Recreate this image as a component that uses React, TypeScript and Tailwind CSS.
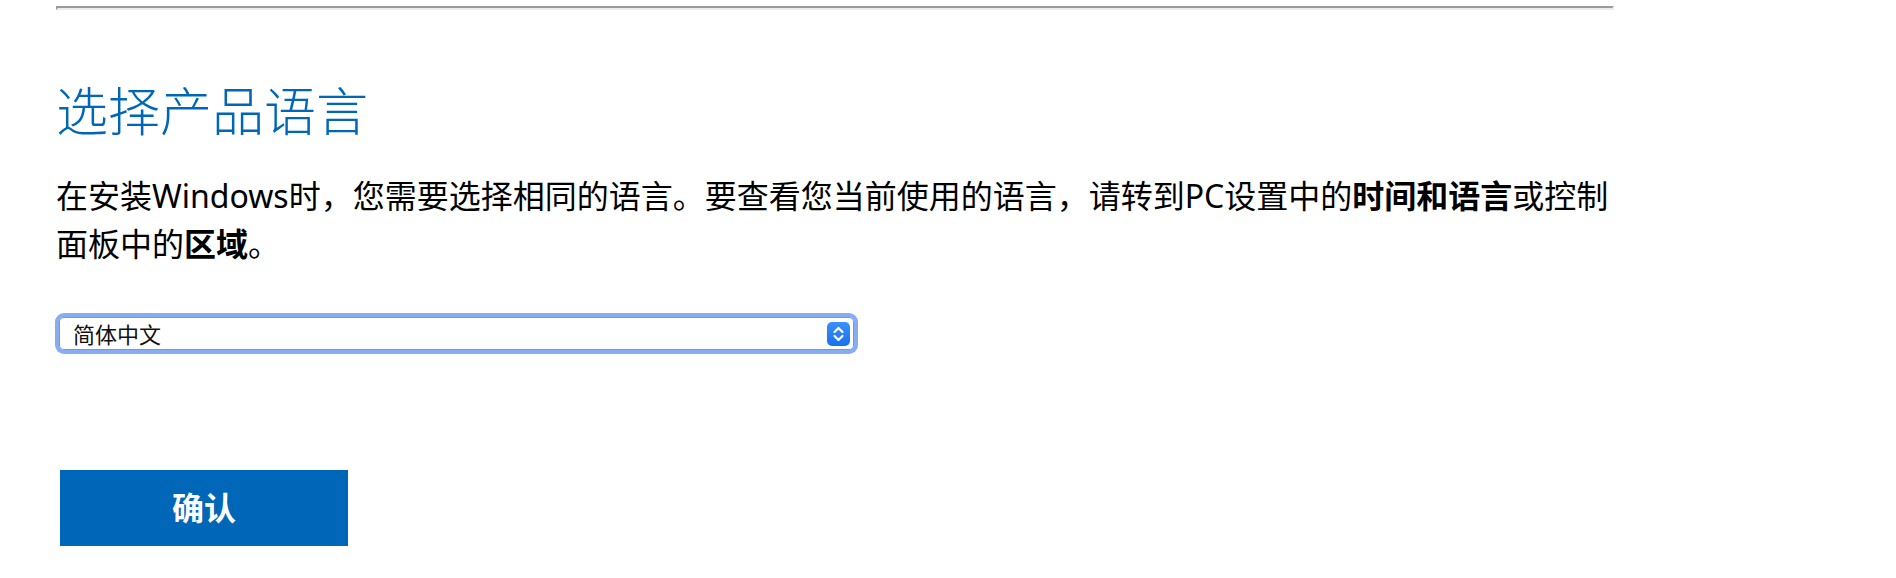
export default function App() {
  return (
    <main
      className="min-h-screen bg-white text-black"
      style={{ fontFamily: '"Noto Sans", "Noto Sans CJK SC", sans-serif' }}
    >
      <div className="w-[1558px] ml-[56px] pt-[6px]">
        {/* divider */}
        <div className="h-0 border-t-2 border-l-2 border-b-2 border-r-2 border-t-[#9a9a9a] border-l-[#9a9a9a] border-b-[#ececec] border-r-[#ececec]"></div>

        <h1 className="mt-[70px] text-[52px] leading-[62px] font-light text-[#0067b8]">选择产品语言</h1>

        <p className="mt-[30px] text-[32px] leading-[48px]">
          在安装Windows时，您需要选择相同的语言。要查看您当前使用的语言，请转到PC设置中的<b className="font-bold">时间和语言</b>或控制面板中的<b className="font-bold">区域</b>。
        </p>

        {/* language select */}
        <div className="mt-[45px] w-[803px] h-[41px] -ml-[1px] rounded-[9px] bg-[#86adf4] p-[4px]">
          <div className="h-full rounded-[5px] bg-white flex items-center justify-between pl-[14px] pr-[4px] shadow-[inset_0_0_0_1px_#6e98ea]">
            <span className="text-[22px] leading-none text-[#111]">简体中文</span>
            <span className="w-[23px] h-[24px] rounded-[5px] bg-gradient-to-b from-[#3b90fa] to-[#1871ee] flex items-center justify-center">
              <svg width="23" height="24" viewBox="0 0 23 24" fill="none">
                <path d="M7.5 10 L11.5 6 L15.5 10" stroke="white" strokeWidth="2.2" strokeLinecap="round" strokeLinejoin="round" />
                <path d="M7.5 14 L11.5 18 L15.5 14" stroke="white" strokeWidth="2.2" strokeLinecap="round" strokeLinejoin="round" />
              </svg>
            </span>
          </div>
        </div>

        <button className="mt-[116px] ml-[4px] w-[288px] h-[76px] bg-[#0067b8] text-white text-[32px] font-bold flex items-center justify-center">
          确认
        </button>
      </div>
    </main>
  )
}
